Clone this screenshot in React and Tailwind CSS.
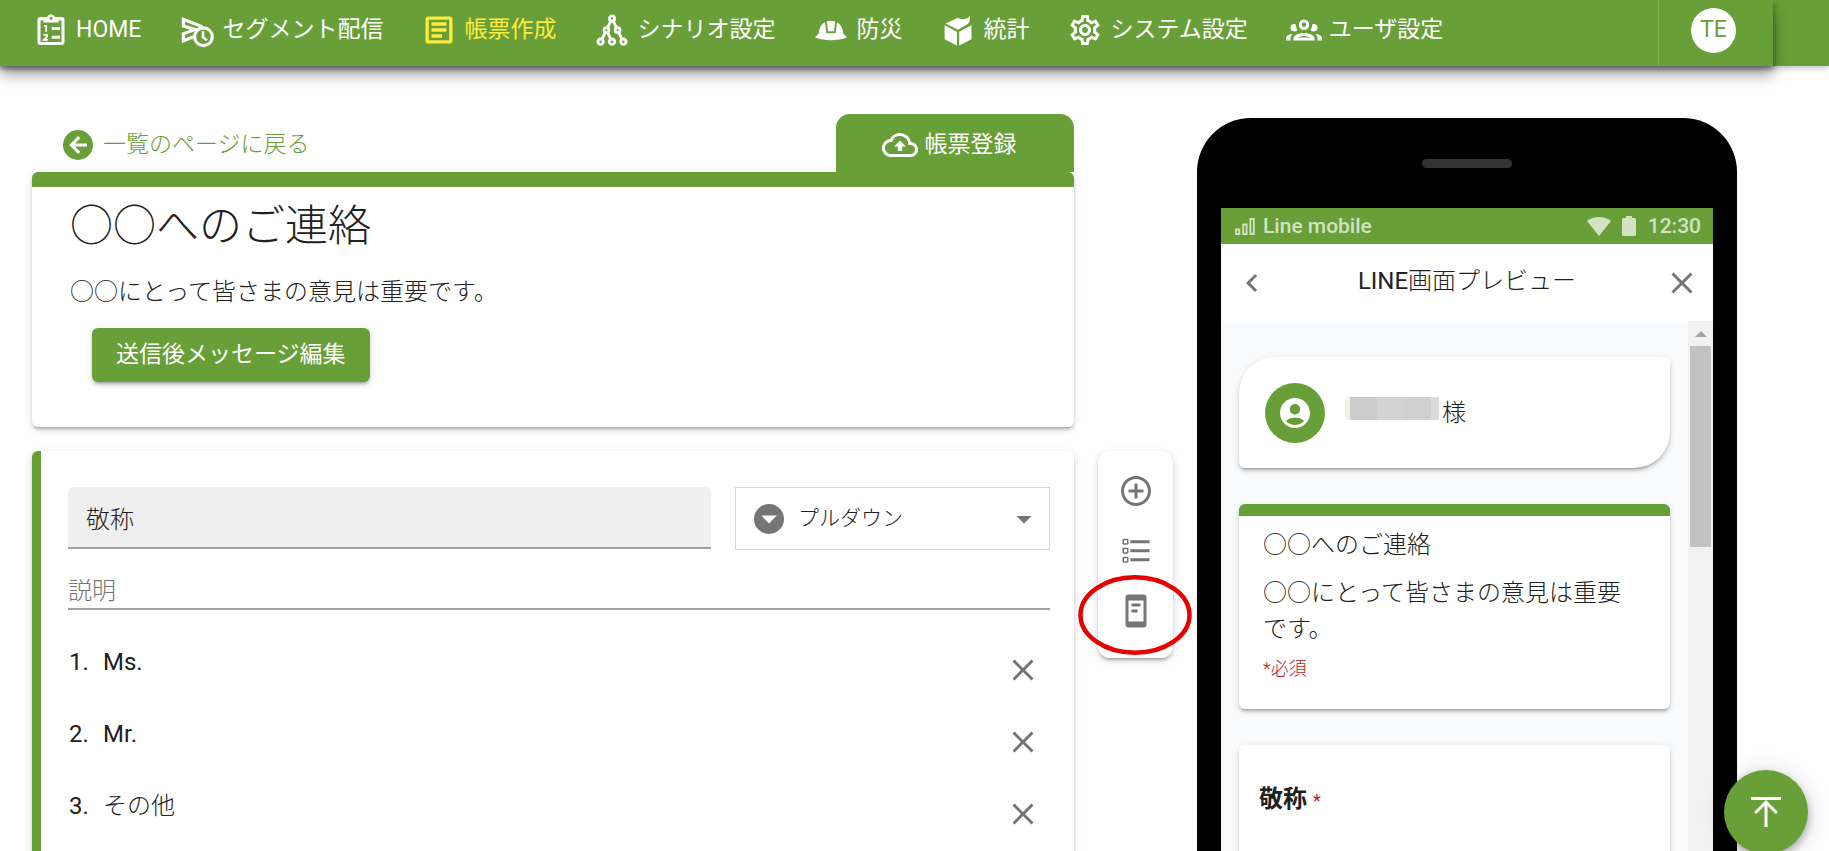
import { useState } from 'react';
import {
  MdOutlineSettings,
  MdOutlineBackup,
  MdClose,
  MdChevronLeft,
  MdAddCircleOutline,
  MdAccountCircle,
  MdArrowDropDown,
} from 'react-icons/md';

const CARD_SHADOW =
  'shadow-[0_4px_2px_-3px_rgba(0,0,0,0.2),0_3px_3px_rgba(0,0,0,0.14),0_2px_8px_rgba(0,0,0,0.12)]';

function Glyph({ children, className = 'size-9' }) {
  return (
    <svg viewBox="0 0 24 24" fill="currentColor" aria-hidden="true" className={`shrink-0 ${className}`}>
      {children}
    </svg>
  );
}

function ClipboardIcon() {
  return (
    <Glyph>
      <path
        fillRule="evenodd"
        d="M19 3.4h-4.3a2.9 2.9 0 0 0-5.4 0H5a2 2 0 0 0-2 2V20a2 2 0 0 0 2 2h14a2 2 0 0 0 2-2V5.4a2 2 0 0 0-2-2zM12 3.2a1 1 0 1 1 0 2 1 1 0 0 1 0-2zM5 5.6h2V7h10V5.6h2V20H5z"
      />
      <path d="M12.5 10h5.5v2h-5.5zM12.5 15.8h5.5v2h-5.5z" />
      <path
        d="M7.2 9.2h1.6v4M7 15.2h2.4v1.3L7.3 18.6h2.6"
        fill="none"
        stroke="currentColor"
        strokeWidth="1.2"
      />
    </Glyph>
  );
}

function SendClockIcon() {
  return (
    <Glyph>
      <g fill="none" stroke="currentColor" strokeWidth="2.1">
        <path d="M15.5 9.800 2.900 4.800v4.500L10.800 11.600 2.900 14.500v4.700l7-2.800" />
        <circle cx="16.300" cy="16.500" r="5.900" />
        <path d="M16 12.900v4l2.600 2" strokeWidth="1.7" />
      </g>
    </Glyph>
  );
}

function ArticleIcon() {
  return (
    <Glyph>
      <rect x="4.100" y="4.100" width="15.800" height="15.800" rx="0.800" fill="none" stroke="currentColor" strokeWidth="2.200" />
      <path d="M7 6.900h10v2.200H7zM7 10.900h10v2.200H7zM7 14.900h7v2.200H7z" />
    </Glyph>
  );
}

function ScenarioIcon() {
  return (
    <Glyph>
      <g fill="none" stroke="currentColor" strokeWidth="1.9">
        <circle cx="12" cy="4.300" r="1.700" />
        <circle cx="8.300" cy="12.100" r="1.600" />
        <circle cx="15.700" cy="12.100" r="1.600" />
        <circle cx="4.400" cy="19.800" r="1.800" />
        <circle cx="12" cy="19.800" r="1.800" />
        <circle cx="19.600" cy="19.800" r="1.800" />
        <path d="M11.200 5.900 9 10.600M12.800 5.900l2.200 4.700M7.600 13.600l-2.400 4.600M9 13.600l2.200 4.600M16.400 13.600l2.400 4.600" />
      </g>
    </Glyph>
  );
}

function HelmetIcon() {
  return (
    <Glyph>
      <path d="M8 6.900 8.900 14.200h6.200L16 6.900c2.500 1.300 3.900 4 4.200 7.600l1.900 1.700c.5.500.4 1-.2 1.200-2.800.9-6 1.400-9.900 1.400s-7.100-.5-9.900-1.400c-.6-.2-.7-.7-.2-1.200l1.900-1.700c.3-3.600 1.700-6.300 4.200-7.600z" />
      <path d="M9.200 6.400c1.700-.8 3.900-.8 5.600 0L14 12.900h-4z" />
    </Glyph>
  );
}

function BoxIcon() {
  return (
    <Glyph>
      <path d="M3.100 8.900 11.300 13.100v9.300L3.100 18.200zM21 8.900 12.800 13.100v9.300L21 18.200z" />
      <path d="M3.700 7.700 12 3.800c1.500.9 3 1.300 4.600.9 1.400-.3 2.500-1 3.400-2 .1 2-.2 3.700-1.200 5.200L12 11.800z" />
    </Glyph>
  );
}

function GroupIcon() {
  return (
    <Glyph>
      <path d="M12,5A3.500,3.500 0 0,0 8.500,8.500A3.500,3.500 0 0,0 12,12A3.500,3.500 0 0,0 15.500,8.500A3.500,3.500 0 0,0 12,5M12,7A1.500,1.500 0 0,1 13.500,8.500A1.500,1.500 0 0,1 12,10A1.500,1.500 0 0,1 10.500,8.500A1.500,1.500 0 0,1 12,7M5.500,8A2.500,2.500 0 0,0 3,10.500C3,11.440 3.530,12.250 4.290,12.680C4.650,12.880 5.060,13 5.500,13C5.940,13 6.350,12.880 6.710,12.680C7.080,12.470 7.390,12.170 7.620,11.810C6.890,10.860 6.500,9.700 6.500,8.500C6.500,8.410 6.500,8.310 6.500,8.220C6.200,8.080 5.860,8 5.500,8M18.500,8C18.140,8 17.800,8.080 17.500,8.220C17.500,8.310 17.500,8.410 17.500,8.500C17.500,9.700 17.110,10.860 16.380,11.810C16.500,12 16.630,12.150 16.780,12.300C16.940,12.450 17.100,12.580 17.290,12.680C17.650,12.880 18.060,13 18.500,13C18.940,13 19.350,12.880 19.710,12.680C20.470,12.250 21,11.440 21,10.500A2.500,2.500 0 0,0 18.500,8M12,14C9.660,14 5,15.170 5,17.500V19H19V17.500C19,15.170 14.340,14 12,14M4.710,14.550C2.780,14.780 0,15.760 0,17.500V19H3V17.070C3,16.060 3.690,15.220 4.710,14.550M19.290,14.550C20.310,15.220 21,16.060 21,17.070V19H24V17.500C24,15.760 21.220,14.780 19.290,14.550M12,16C13.530,16 15.240,16.500 16.230,17H7.770C8.760,16.500 10.470,16 12,16Z" />
    </Glyph>
  );
}

function BackIcon() {
  return (
    <Glyph>
      <path d="M2,12A10,10 0 0,1 12,2A10,10 0 0,1 22,12A10,10 0 0,1 12,22A10,10 0 0,1 2,12M18,11H10L13.500,7.500L12.080,6.080L6.160,12L12.080,17.920L13.500,16.500L10,13H18V11Z" />
    </Glyph>
  );
}

function DropdownCircleIcon() {
  return (
    <Glyph>
      <path
        fillRule="evenodd"
        d="M12 2a10 10 0 1 0 0 20 10 10 0 0 0 0-20zM6.800 9.600h10.400L12 15z"
      />
    </Glyph>
  );
}

function ChecklistIcon() {
  return (
    <Glyph>
      <g fill="none" stroke="currentColor" strokeWidth="1">
        <rect x="3.500" y="4.300" width="3" height="3" rx="0.400" />
        <rect x="3.500" y="10.300" width="3" height="3" rx="0.400" />
        <rect x="3.500" y="16.300" width="3" height="3" rx="0.400" />
      </g>
      <path d="M8.200 4.900H21v1.900H8.200zM8.200 10.900H21v1.900H8.200zM8.200 16.900H21v1.900H8.200z" />
    </Glyph>
  );
}

function PhoneTextIcon() {
  return (
    <Glyph>
      <path
        fillRule="evenodd"
        d="M7 1h10a2 2 0 0 1 2 2v18a2 2 0 0 1-2 2H7a2 2 0 0 1-2-2V3a2 2 0 0 1 2-2zM7 5v14h10V5z"
      />
      <path d="M9 7h6v2H9zM9 11h4v2H9z" />
    </Glyph>
  );
}

function ToTopIcon() {
  return (
    <Glyph>
      <path d="M4.080,11.920L12,4L19.920,11.920L18.500,13.330L13,7.830V22H11V7.830L5.500,13.330L4.080,11.920M12,4H22V2H2V4H12Z" />
    </Glyph>
  );
}

const NAV = [
  { label: 'HOME', icon: <ClipboardIcon /> },
  { label: 'セグメント配信', icon: <SendClockIcon /> },
  { label: '帳票作成', icon: <ArticleIcon />, active: true },
  { label: 'シナリオ設定', icon: <ScenarioIcon /> },
  { label: '防災', icon: <HelmetIcon /> },
  { label: '統計', icon: <BoxIcon /> },
  { label: 'システム設定', icon: <MdOutlineSettings className="size-9 shrink-0" /> },
  { label: 'ユーザ設定', icon: <GroupIcon /> },
];

function Header() {
  return (
    <header className="relative z-10 bg-[#689f38] pr-14 shadow-[0_2px_6px_rgba(0,0,0,0.25)]">
      <div className="flex h-[66px] bg-[#689f38] pl-[33px] shadow-[0_8px_14px_rgba(0,0,0,0.4),0_3px_5px_rgba(0,0,0,0.3)]">
        <nav className="flex flex-1 items-center gap-[38px] pb-[6px]">
          {NAV.map((item) => (
            <a
              key={item.label}
              href="#"
              aria-current={item.active ? 'page' : undefined}
              className={`flex items-center gap-[7px] whitespace-nowrap text-[23px] leading-9 ${
                item.active ? 'text-[#ffeb3b]' : 'text-white'
              }`}
            >
              {item.icon}
              {item.label}
            </a>
          ))}
        </nav>
        <div className="flex w-[115px] items-center border-l border-white/15 pb-[6px] pl-8">
          <button
            type="button"
            className="flex size-[45px] items-center justify-center rounded-full bg-white pt-px text-[23px] text-[#689f38]"
          >
            TE
          </button>
        </div>
      </div>
    </header>
  );
}

function FormHeadCard() {
  return (
    <section
      className={`rounded-md border-t-[15px] border-[#689f38] bg-white px-[38px] pt-[11px] pb-[45px] ${CARD_SHADOW}`}
    >
      <h1 className="text-[43px] leading-[56px] font-light">○○へのご連絡</h1>
      <p className="mt-5 text-[24px] leading-9 font-light">○○にとって皆さまの意見は重要です。</p>
      <button
        type="button"
        className={`mt-[18px] ml-[22px] h-[54px] rounded-md bg-[#689f38] px-6 text-[23px] text-white ${CARD_SHADOW}`}
      >
        送信後メッセージ編集
      </button>
    </section>
  );
}

function QuestionCard() {
  const [options, setOptions] = useState(['Ms.', 'Mr.', 'その他']);
  return (
    <section
      className={`mt-6 rounded-md border-l-[9px] border-[#689f38] bg-white pt-9 pr-6 pb-16 pl-[27px] ${CARD_SHADOW}`}
    >
      <div className="flex gap-6">
        <input
          aria-label="質問"
          defaultValue="敬称"
          className="h-[62px] min-w-0 flex-1 rounded-t-md border-b-2 border-[#a0a0a0] bg-[#efefef] px-[18px] text-[24px] font-light outline-none"
        />
        <div className="relative w-[315px]">
          <select
            aria-label="質問の種類"
            className="h-[63px] w-full appearance-none border border-[#d8d8d8] bg-white pl-[62px] text-[21px] font-light outline-none"
          >
            <option>プルダウン</option>
          </select>
          <span className="pointer-events-none absolute inset-y-0 left-4 flex items-center text-[#757575]">
            <DropdownCircleIcon />
          </span>
          <span className="pointer-events-none absolute inset-y-0 right-2 flex items-center text-[#757575]">
            <MdArrowDropDown className="size-9" />
          </span>
        </div>
      </div>
      <input
        aria-label="説明"
        placeholder="説明"
        className="mt-6 block h-9 w-full border-b-2 border-[#a0a0a0] text-[24px] font-light outline-none placeholder:text-[#757575]"
      />
      <ol className="mt-6">
        {options.map((option, i) => (
          <li key={option} className="flex h-[72px] items-center pr-[9px]">
            <span className="w-[35px] pb-4 pl-px text-[24px] leading-9">{i + 1}.</span>
            <span className="flex-1 pb-4 text-[24px] leading-9">
              <span className={option === 'その他' ? 'font-light' : ''}>{option}</span>
            </span>
            <button
              type="button"
              aria-label={`${option}を削除`}
              onClick={() => setOptions(options.filter((o) => o !== option))}
              className="text-[#757575]"
            >
              <MdClose className="size-9" />
            </button>
          </li>
        ))}
      </ol>
    </section>
  );
}

function ToolRail() {
  return (
    <aside
      className={`mt-[337px] flex h-[207px] w-[75px] shrink-0 flex-col items-center gap-6 rounded-xl bg-white pt-[22px] text-[#757575] ${CARD_SHADOW}`}
    >
      <button type="button" aria-label="質問を追加">
        <MdAddCircleOutline className="size-9" />
      </button>
      <button type="button" aria-label="一覧">
        <ChecklistIcon />
      </button>
      <button type="button" aria-label="プレビュー" className="relative">
        <PhoneTextIcon />
        <svg
          viewBox="0 0 114 80"
          aria-hidden="true"
          className="pointer-events-none absolute -top-[18px] -left-10 z-10 h-20 w-[114px] max-w-none"
        >
          <ellipse cx="57" cy="40" rx="54.500" ry="37.700" fill="none" stroke="#e60000" strokeWidth="4.500" />
        </svg>
      </button>
    </aside>
  );
}

function StatusBar() {
  return (
    <div className="flex h-9 items-center bg-[#689f38] pr-3 pl-[14px] text-[21px] leading-9 font-medium text-[#d2e2c3]">
      <svg viewBox="0 0 20 17" aria-hidden="true" className="mr-2 h-[17px] w-5" fill="none" stroke="currentColor" strokeWidth="1.800">
        <path d="M1 11.500h3.400v4.500H1zM8.200 6.500h3.400v9.500H8.200zM15.400 1h3.400v15h-3.400z" />
      </svg>
      <span className="flex-1">Line mobile</span>
      <svg viewBox="0 0 24 19" aria-hidden="true" className="mr-[11px] h-[19px] w-6" fill="currentColor">
        <path d="M12 19 0 4C3.400 1.400 7.500 0 12 0s8.600 1.400 12 4z" />
      </svg>
      <svg viewBox="0 0 14 20" aria-hidden="true" className="mr-3 h-5 w-[14px]" fill="currentColor">
        <path d="M4 0h6v2h2.500A1.500 1.500 0 0 1 14 3.500v15a1.500 1.500 0 0 1-1.500 1.500h-11A1.500 1.500 0 0 1 0 18.500v-15A1.500 1.500 0 0 1 1.500 2H4z" />
      </svg>
      <span>12:30</span>
    </div>
  );
}

function PhonePreview() {
  return (
    <aside className="mt-1 w-[540px] shrink-0 rounded-[54px] bg-black px-6 pt-[41px] pb-24">
      <div className="mx-auto h-[9px] w-[90px] rounded-full bg-[#333]" />
      <div className="mt-10 bg-[#fafbfd]">
        <StatusBar />
        <div className="flex h-[77px] items-center justify-between bg-white px-[13px]">
          <button type="button" aria-label="戻る" className="text-[#757575]">
            <MdChevronLeft className="size-9" />
          </button>
          <h2 className="pb-1 text-[24px] leading-9 font-light">
            <span className="font-normal">LINE</span>画面プレビュー
          </h2>
          <button type="button" aria-label="閉じる" className="text-[#757575]">
            <MdClose className="size-9" />
          </button>
        </div>
        <div className="flex">
          <div className="flex min-w-0 flex-1 flex-col gap-9 px-[18px] py-9">
            <section
              className={`flex h-[111px] items-center rounded-md rounded-tl-[36px] rounded-br-[36px] bg-white pl-[26px] ${CARD_SHADOW}`}
            >
              <span className="flex size-[60px] items-center justify-center rounded-full bg-[#689f38] text-white">
                <MdAccountCircle className="size-9" />
              </span>
              <span className="mb-[9px] ml-5 flex h-[23px]">
                <span className="w-[5px] bg-[#f0f5eb]" />
                <span className="w-[27px] bg-[#ccc]" />
                <span className="w-[27px] bg-[#d3d3d3]" />
                <span className="w-[27px] bg-[#d0d0d0]" />
                <span className="w-2 bg-[#dadada]" />
              </span>
              <span className="ml-[3px] text-[24px] leading-9 font-light">様</span>
            </section>
            <section
              className={`rounded-md border-t-[12px] border-[#689f38] bg-white pt-[11px] pr-9 pb-[27px] pl-6 ${CARD_SHADOW}`}
            >
              <h3 className="text-[24px] leading-9 font-light">○○へのご連絡</h3>
              <p className="mt-3 text-[24px] leading-9 font-light">○○にとって皆さまの意見は重要です。</p>
              <p className="mt-2 text-[18px] leading-[27px] font-light text-[#b71c1c]">*必須</p>
            </section>
            <section className={`h-[280px] rounded-md bg-white px-5 pt-9 ${CARD_SHADOW}`}>
              <h3 className="text-[24px] leading-9 font-bold">
                敬称 <span className="text-[18px] font-normal text-[#b71c1c]">*</span>
              </h3>
            </section>
          </div>
          <div className="w-[25px] bg-[#f1f1f1] px-[2px]" aria-hidden="true">
            <div className="flex h-[25px] items-center justify-center">
              <svg viewBox="0 0 12 6" className="h-[6px] w-3" fill="#a3a3a3">
                <path d="M6 0 12 6H0z" />
              </svg>
            </div>
            <div className="h-[201px] bg-[#c1c1c1]" />
          </div>
        </div>
      </div>
    </aside>
  );
}

export default function App() {
  return (
    <div className="h-screen overflow-hidden bg-[#fefefe] font-[Roboto,'Noto_Sans_CJK_JP',sans-serif] text-[#212121]">
      <Header />
      <main className="flex items-start gap-6 pt-12 pr-[92px] pl-8">
        <div className="min-w-0 flex-1">
          <div className="flex items-center justify-between">
            <a href="#" className="flex items-center gap-[7px] pt-1 pl-7 text-[23px] leading-9 font-light text-[#689f38]">
              <BackIcon />
              一覧のページに戻る
            </a>
            <button
              type="button"
              className="flex h-[58px] w-[238px] items-center justify-center gap-[7px] rounded-t-[14px] bg-[#689f38] pt-1 pr-3 text-[23px] text-white"
            >
              <MdOutlineBackup className="size-9" />
              帳票登録
            </button>
          </div>
          <FormHeadCard />
          <QuestionCard />
        </div>
        <ToolRail />
        <PhonePreview />
      </main>
      <button
        type="button"
        aria-label="ページの先頭へ"
        className="fixed right-[21px] -bottom-[3px] z-20 flex size-[84px] items-center justify-center rounded-full bg-[#689f38] text-white shadow-[0_4px_8px_rgba(0,0,0,0.3),0_2px_24px_rgba(0,0,0,0.15)]"
      >
        <ToTopIcon />
      </button>
    </div>
  );
}
